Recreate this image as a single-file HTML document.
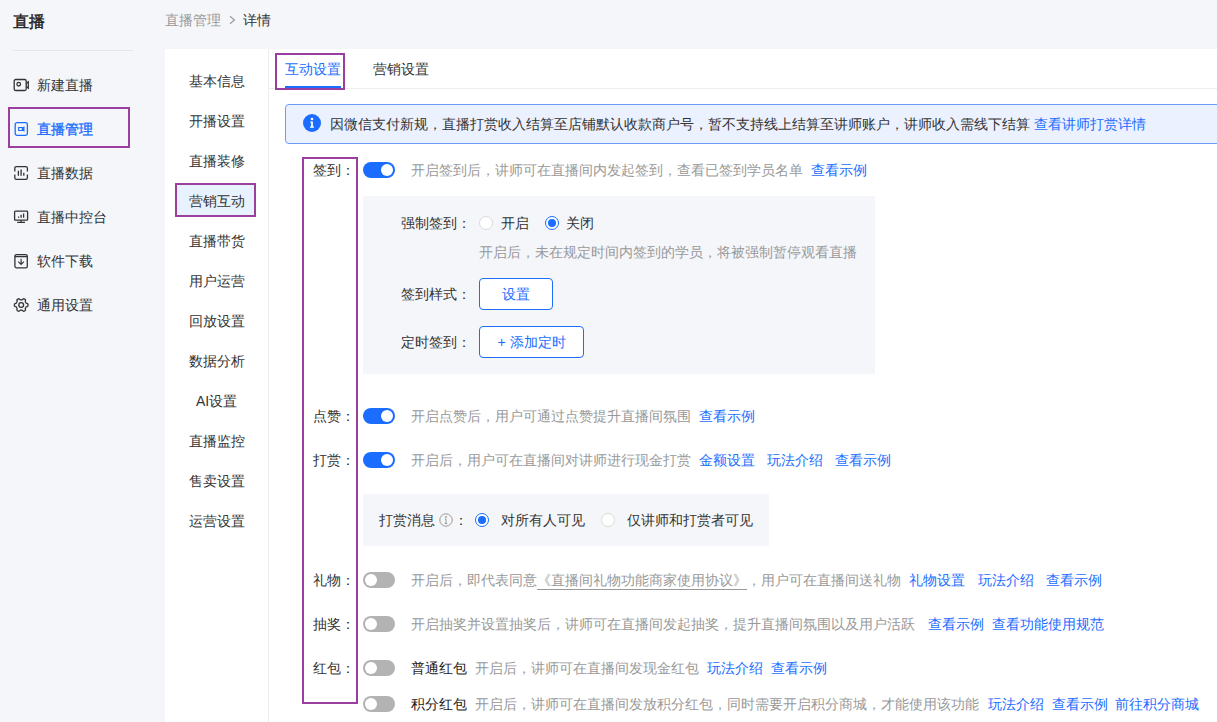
<!DOCTYPE html>
<html><head><meta charset="utf-8">
<style>
*{margin:0;padding:0;box-sizing:border-box}
html,body{width:1217px;height:722px;overflow:hidden}
body{background:#f5f6fa;font-family:"Liberation Sans",sans-serif;font-size:14px;color:#333;position:relative}
.a{position:absolute;white-space:nowrap;line-height:20px}
.box{position:absolute}
.pur{position:absolute;border:2px solid #9a3f9f}
.g{color:#999}
.b{color:#1a6dff}
.tog{position:absolute;width:32px;height:16px;border-radius:8px;background:#1a6dff}
.tog i{position:absolute;top:2px;left:18px;width:12px;height:12px;border-radius:50%;background:#fff}
.tog.off{background:#b3b3b3}
.tog.off i{left:2px}
.rad{position:absolute;width:14px;height:14px;border-radius:50%;border:1px solid #d9d9d9;background:#fff}
.rad.on{border-color:#1a6dff}
.rad.on i{position:absolute;left:2px;top:2px;width:8px;height:8px;border-radius:50%;background:#1a6dff}
.btn{position:absolute;height:32px;border:1px solid #1a6dff;border-radius:4px;background:#fff;color:#1a6dff;text-align:center;line-height:30px}
</style></head>
<body>
<!-- left sidebar -->
<div class="a" style="left:13px;top:12px;font-size:16px;color:#222;-webkit-text-stroke:0.45px #222">直播</div>
<div class="box" style="left:13px;top:50px;width:120px;height:1px;background:#e6e7eb"></div>

<svg class="box" style="left:12px;top:77px" width="18" height="16" viewBox="0 0 18 16" fill="none" stroke="#333" stroke-width="1.3">
  <rect x="2.2" y="2.5" width="12" height="11" rx="1.5"/>
  <circle cx="6.7" cy="7.2" r="1.8"/>
  <path d="M14.2 6.5 L16.3 4.8 V11.2 L14.2 9.5"/>
</svg>
<div class="a" style="left:37px;top:75px">新建直播</div>

<svg class="box" style="left:12px;top:121px" width="18" height="16" viewBox="0 0 18 16" fill="none" stroke="#1a6dff" stroke-width="1.3">
  <rect x="3.2" y="1.7" width="12.2" height="12.6" rx="1.8"/>
  <path d="M6.7 6.5 h3.6 v3 h-3.6 z M10.3 7.3 l1.6 -0.9 v3.2 l-1.6 -0.9" stroke-width="1.2"/>
</svg>
<div class="a" style="left:37px;top:119px;color:#1a6dff;-webkit-text-stroke:0.35px #1a6dff">直播管理</div>

<svg class="box" style="left:12px;top:165px" width="18" height="16" viewBox="0 0 18 16" fill="none" stroke="#333" stroke-width="1.3">
  <path d="M2.8 6.6 V3.2 q0 -1.6 1.6 -1.6 h9.4 q1.6 0 1.6 1.6 V6.6 M2.8 9.6 V12.8 q0 1.6 1.6 1.6 h9.4 q1.6 0 1.6 -1.6 V9.6"/>
  <path d="M6.4 10.8 V5.8 M9.1 10.8 V4.4 M11.8 10.8 V7.8"/>
</svg>
<div class="a" style="left:37px;top:163px">直播数据</div>

<svg class="box" style="left:12px;top:209px" width="18" height="16" viewBox="0 0 18 16" fill="none" stroke="#333" stroke-width="1.3">
  <rect x="2.6" y="2.2" width="13" height="9" rx="0.8"/>
  <path d="M9.1 11.2 V13 M5.2 13.4 H13"/>
  <path d="M6.6 8.8 V7.4 M9.1 8.8 V5.8 M11.6 8.8 V4.4"/>
</svg>
<div class="a" style="left:37px;top:207px">直播中控台</div>

<svg class="box" style="left:12px;top:253px" width="18" height="16" viewBox="0 0 18 16" fill="none" stroke="#333" stroke-width="1.3">
  <rect x="2.9" y="1.6" width="12.4" height="13.2" rx="1.6"/>
  <path d="M2.9 3.6 H15.3"/>
  <path d="M9.1 5.8 V11.2 M6.3 8.7 L9.1 11.4 L11.9 8.7" stroke-width="1.15"/>
</svg>
<div class="a" style="left:37px;top:251px">软件下载</div>

<svg class="box" style="left:12px;top:297px" width="18" height="16" viewBox="0 0 18 16" fill="none" stroke="#333" stroke-width="1.3">
  <path d="M16.00 8.00 L15.97 8.59 L15.83 9.17 L15.00 9.55 L14.15 9.80 L13.91 10.20 L13.70 10.60 L13.46 10.98 L13.24 11.39 L13.44 12.24 L13.52 13.15 L13.10 13.57 L12.60 13.89 L12.07 14.16 L11.50 14.32 L10.75 13.80 L10.12 13.19 L9.65 13.18 L9.20 13.20 L8.75 13.18 L8.28 13.19 L7.65 13.80 L6.90 14.32 L6.33 14.16 L5.80 13.89 L5.30 13.57 L4.88 13.15 L4.96 12.24 L5.16 11.39 L4.94 10.98 L4.70 10.60 L4.49 10.20 L4.25 9.80 L3.40 9.55 L2.57 9.17 L2.43 8.59 L2.40 8.00 L2.43 7.41 L2.57 6.83 L3.40 6.45 L4.25 6.20 L4.49 5.80 L4.70 5.40 L4.94 5.02 L5.16 4.61 L4.96 3.76 L4.88 2.85 L5.30 2.43 L5.80 2.11 L6.33 1.84 L6.90 1.68 L7.65 2.20 L8.28 2.81 L8.75 2.82 L9.20 2.80 L9.65 2.82 L10.12 2.81 L10.75 2.20 L11.50 1.68 L12.07 1.84 L12.60 2.11 L13.10 2.43 L13.52 2.85 L13.44 3.76 L13.24 4.61 L13.46 5.02 L13.70 5.40 L13.91 5.80 L14.15 6.20 L15.00 6.45 L15.83 6.83 L15.97 7.41Z" stroke-linejoin="round"/>
  <circle cx="9.2" cy="8" r="2.4"/>
</svg>
<div class="a" style="left:37px;top:295px">通用设置</div>

<div class="pur" style="left:8px;top:107px;width:122px;height:41px"></div>

<!-- breadcrumb -->
<div class="a" style="left:165px;top:10px;color:#999">直播管理</div>
<svg class="box" style="left:228px;top:14px" width="10" height="12" viewBox="0 0 10 12" fill="none" stroke="#9a9a9a" stroke-width="1.2"><path d="M2 2.3 L6.4 6 L2 9.7"/></svg>
<div class="a" style="left:243px;top:10px;color:#333">详情</div>

<!-- white panel -->
<div class="box" style="left:165px;top:49px;width:1052px;height:673px;background:#fff"></div>
<div class="box" style="left:268px;top:49px;width:1px;height:673px;background:#ececec"></div>

<!-- submenu -->
<div class="box" style="left:177px;top:185px;width:77px;height:30px;background:#e8f2fe"></div>
<div id="sub"></div>
<div class="a" style="left:189px;top:71px">基本信息</div>
<div class="a" style="left:189px;top:111px">开播设置</div>
<div class="a" style="left:189px;top:151px">直播装修</div>
<div class="a" style="left:189px;top:191px">营销互动</div>
<div class="a" style="left:189px;top:231px">直播带货</div>
<div class="a" style="left:189px;top:271px">用户运营</div>
<div class="a" style="left:189px;top:311px">回放设置</div>
<div class="a" style="left:189px;top:351px">数据分析</div>
<div class="a" style="left:196px;top:391px">AI设置</div>
<div class="a" style="left:189px;top:431px">直播监控</div>
<div class="a" style="left:189px;top:471px">售卖设置</div>
<div class="a" style="left:189px;top:511px">运营设置</div>
<div class="pur" style="left:175px;top:183px;width:81px;height:34px"></div>

<!-- tabs -->
<div class="box" style="left:269px;top:88px;width:948px;height:1px;background:#eeeeee"></div>
<div class="a" style="left:285px;top:59px;color:#1a6dff">互动设置</div>
<div class="box" style="left:285px;top:86px;width:56px;height:2px;background:#1a6dff"></div>
<div class="a" style="left:373px;top:59px">营销设置</div>
<div class="pur" style="left:275px;top:53px;width:70px;height:37px"></div>

<!-- alert -->
<div class="box" style="left:285px;top:104px;width:960px;height:40px;border:1px solid #6b9cf5;border-radius:4px;background:#ebf1fe"></div>
<svg class="box" style="left:303px;top:114px" width="18" height="18" viewBox="0 0 18 18">
  <circle cx="9" cy="9" r="9" fill="#1a6dff"/>
  <circle cx="9" cy="5" r="1.3" fill="#fff"/>
  <path d="M7.3 7.6 H9.9 V12.6 H11 V13.8 H7 V12.6 H8.1 V8.8 H7.3 Z" fill="#fff"/>
</svg>
<div class="a" style="left:330px;top:114px">因微信支付新规，直播打赏收入结算至店铺默认收款商户号，暂不支持线上结算至讲师账户，讲师收入需线下结算 <span class="b">查看讲师打赏详情</span></div>

<!-- form -->

<!-- 签到 -->
<div class="a" style="left:313px;top:160px">签到：</div>
<div class="tog" style="left:363px;top:162px"><i></i></div>
<div class="a g" style="left:411px;top:160px">开启签到后，讲师可在直播间内发起签到，查看已签到学员名单</div>
<div class="a b" style="left:811px;top:160px">查看示例</div>

<div class="box" style="left:363px;top:196px;width:512px;height:178px;background:#f5f6fa"></div>
<div class="a" style="left:401px;top:213px">强制签到：</div>
<div class="rad" style="left:479px;top:216px"></div>
<div class="a" style="left:501px;top:213px">开启</div>
<div class="rad on" style="left:545px;top:216px"><i></i></div>
<div class="a" style="left:566px;top:213px">关闭</div>
<div class="a g" style="left:479px;top:242px">开启后，未在规定时间内签到的学员，将被强制暂停观看直播</div>
<div class="a" style="left:401px;top:284px">签到样式：</div>
<div class="btn" style="left:479px;top:278px;width:74px">设置</div>
<div class="a" style="left:401px;top:332px">定时签到：</div>
<div class="btn" style="left:479px;top:326px;width:105px">+ 添加定时</div>

<!-- 点赞 -->
<div class="a" style="left:313px;top:406px">点赞：</div>
<div class="tog" style="left:363px;top:408px"><i></i></div>
<div class="a g" style="left:411px;top:406px">开启点赞后，用户可通过点赞提升直播间氛围</div>
<div class="a b" style="left:699px;top:406px">查看示例</div>

<!-- 打赏 -->
<div class="a" style="left:313px;top:450px">打赏：</div>
<div class="tog" style="left:363px;top:452px"><i></i></div>
<div class="a g" style="left:411px;top:450px">开启后，用户可在直播间对讲师进行现金打赏</div>
<div class="a b" style="left:699px;top:450px">金额设置</div>
<div class="a b" style="left:767px;top:450px">玩法介绍</div>
<div class="a b" style="left:835px;top:450px">查看示例</div>

<div class="box" style="left:363px;top:494px;width:406px;height:52px;background:#f5f6fa"></div>
<div class="a" style="left:379px;top:510px">打赏消息</div>
<svg class="box" style="left:439px;top:513px" width="14" height="14" viewBox="0 0 14 14" fill="none" stroke="#999" stroke-width="1">
  <circle cx="7" cy="7" r="6.2"/>
  <path d="M7 6 V10.5 M5.8 10.5 H8.2 M6 6 H7" />
  <circle cx="7" cy="4" r="0.5" fill="#999"/>
</svg>
<div class="a" style="left:454px;top:510px">：</div>
<div class="rad on" style="left:475px;top:513px"><i></i></div>
<div class="a" style="left:501px;top:510px">对所有人可见</div>
<div class="rad" style="left:601px;top:513px"></div>
<div class="a" style="left:627px;top:510px">仅讲师和打赏者可见</div>

<!-- 礼物 -->
<div class="a" style="left:313px;top:570px">礼物：</div>
<div class="tog off" style="left:363px;top:572px"><i></i></div>
<div class="a g" style="left:411px;top:570px">开启后，即代表同意<span style="border-bottom:1px solid #999;padding-bottom:1px">《直播间礼物功能商家使用协议》</span>，用户可在直播间送礼物</div>
<div class="a b" style="left:909px;top:570px">礼物设置</div>
<div class="a b" style="left:978px;top:570px">玩法介绍</div>
<div class="a b" style="left:1046px;top:570px">查看示例</div>

<!-- 抽奖 -->
<div class="a" style="left:313px;top:614px">抽奖：</div>
<div class="tog off" style="left:363px;top:616px"><i></i></div>
<div class="a g" style="left:411px;top:614px">开启抽奖并设置抽奖后，讲师可在直播间发起抽奖，提升直播间氛围以及用户活跃</div>
<div class="a b" style="left:928px;top:614px">查看示例</div>
<div class="a b" style="left:992px;top:614px">查看功能使用规范</div>

<!-- 红包 -->
<div class="a" style="left:313px;top:658px">红包：</div>
<div class="tog off" style="left:363px;top:660px"><i></i></div>
<div class="a" style="left:411px;top:658px;color:#222">普通红包</div>
<div class="a g" style="left:475px;top:658px">开启后，讲师可在直播间发现金红包</div>
<div class="a b" style="left:707px;top:658px">玩法介绍</div>
<div class="a b" style="left:771px;top:658px">查看示例</div>

<div class="tog off" style="left:363px;top:696px"><i></i></div>
<div class="a" style="left:411px;top:694px;color:#222">积分红包</div>
<div class="a g" style="left:475px;top:694px">开启后，讲师可在直播间发放积分红包，同时需要开启积分商城，才能使用该功能</div>
<div class="a b" style="left:988px;top:694px">玩法介绍</div>
<div class="a b" style="left:1052px;top:694px">查看示例</div>
<div class="a b" style="left:1115px;top:694px">前往积分商城</div>

<div class="pur" style="left:302px;top:157px;width:56px;height:547px"></div>

</body></html>
